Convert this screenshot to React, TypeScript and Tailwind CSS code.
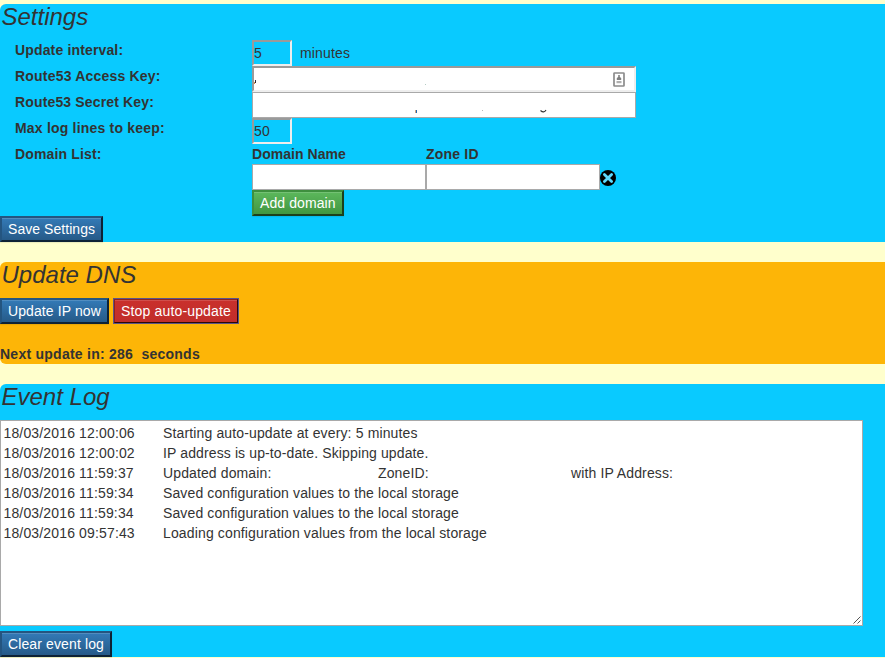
import React from 'react';

const button =
  'box-border block h-[26px] shrink-0 whitespace-nowrap border-2 text-left text-[14px] leading-[20px] text-white pl-[6px] pb-px';
const blue =
  'border-t-[#245580] border-l-[#245580] border-r-[#0e2235] border-b-[#0e2235] bg-linear-to-b from-[#337ab7] to-[#265a88] shadow-[inset_0_1px_0_rgba(255,255,255,0.15),0_1px_1px_rgba(0,0,0,0.075)]';
const inset =
  'box-border border-2 border-t-[#9a9a9a] border-l-[#9a9a9a] border-r-[#eeeeee] border-b-[#eeeeee]';

const log: { time: string; text: React.ReactNode }[] = [
  { time: '18/03/2016 12:00:06', text: 'Starting auto-update at every: 5 minutes' },
  { time: '18/03/2016 12:00:02', text: 'IP address is up-to-date. Skipping update.' },
  {
    time: '18/03/2016 11:59:37',
    text: (
      <span className="flex">
        <span className="w-[215px]">Updated domain:</span>
        <span className="w-[193px]">ZoneID:</span>
        <span>with IP Address:</span>
      </span>
    ),
  },
  { time: '18/03/2016 11:59:34', text: 'Saved configuration values to the local storage' },
  { time: '18/03/2016 11:59:34', text: 'Saved configuration values to the local storage' },
  { time: '18/03/2016 09:57:43', text: 'Loading configuration values from the local storage' },
];

function Heading({ children }: { children: string }) {
  return <h2 className="h-[36px] pl-[1.5px] text-[24px] leading-[26px] italic">{children}</h2>;
}

function Row({
  label,
  children,
  h = 'h-[26px]',
  spacing = 'tracking-[0.2px]',
}: {
  label: string;
  children: React.ReactNode;
  h?: string;
  spacing?: string;
}) {
  return (
    <div className={`flex ${h}`}>
      <div className={`w-[252px] shrink-0 pl-[15px] text-[14px] leading-[20px] font-bold ${spacing}`}>{label}</div>
      {children}
    </div>
  );
}

export default function App() {
  return (
    <div
      className="flex h-[658px] w-[885px] flex-col gap-5 overflow-hidden bg-[#ffffcc] pt-1 text-[14px] text-[#333333]"
      style={{ fontFamily: '"Liberation Sans", Arial, sans-serif' }}
    >
      <section className="h-[238px] shrink-0 rounded-l-[6px] bg-[#09caff]">
        <Heading>Settings</Heading>
        <Row label="Update interval:" spacing="tracking-[0.15px]">
          <div className={`${inset} h-[26px] w-[40px] leading-[22px]`}>5</div>
          <span className="pl-2 leading-[26px] tracking-[0.15px]">minutes</span>
        </Row>
        <Row label="Route53 Access Key:">
          <div className={`${inset} flex h-[26px] w-[384px] items-center justify-between bg-white pr-[9px]`}>
            <svg width="180" height="22" viewBox="0 0 180 22" shapeRendering="crispEdges">
              <path d="M1 12h1v3h-1z" fill="#2b2b3a" />
              <path d="M0 14h1v2h-1z" fill="#c98a4a" />
              <path d="M171 16h1v1h-1z" fill="#b5ccc4" />
            </svg>
            <svg className="mt-px" width="12" height="15" viewBox="0 0 12 15">
              <rect x="1" y="1" width="10" height="13" rx="0.5" fill="#fff" stroke="#8c8c8c" strokeWidth="1.7" />
              <path d="M5.2 3h1.6v2l1.4 1v2H3.8V6l1.4-1z" fill="#808080" />
              <path d="M3.5 9h5v2.2h-5z" fill="#b0b0b0" />
            </svg>
          </div>
        </Row>
        <Row label="Route53 Secret Key:" spacing="tracking-[0.15px]">
          <div className="h-[26px] w-[384px] border border-[#a9a9a9] bg-white">
            <svg width="382" height="24" viewBox="0 0 382 24">
              <path d="M162 17h1v3h-1z" fill="#d4a884" />
              <path d="M163 17h1v3h-1z" fill="#2568b0" />
              <path d="M229 17h1v1h-1z" fill="#b8b8b8" />
              <path d="M287.5 17.5q3.5 3 5.5-0.5" fill="none" stroke="#333" strokeWidth="1.2" />
            </svg>
          </div>
        </Row>
        <Row label="Max log lines to keep:">
          <div className={`${inset} h-[26px] w-[40px] leading-[22px] tracking-[0.15px]`}>50</div>
        </Row>
        <Row label="Domain List:" h="h-[72px]" spacing="tracking-[0.15px]">
          <div>
            <div className="flex h-5 leading-[20px] font-bold tracking-[0.05px]">
              <span className="w-[174px]">Domain Name</span>
              <span className="tracking-[0.2px]">Zone ID</span>
            </div>
            <div className="flex h-[26px] items-center">
              <div className="h-[26px] w-[174px] border border-[#a9a9a9] bg-white" />
              <div className="h-[26px] w-[174px] border border-[#a9a9a9] bg-white" />
              <svg className="mt-0.5" width="16" height="16" viewBox="0 0 16 16">
                <circle cx="8" cy="8" r="8" fill="#000" />
                <path d="M4.4 4.4l7.2 7.2M11.6 4.4l-7.2 7.2" stroke="#5cd8fc" strokeWidth="2.8" strokeLinecap="round" />
              </svg>
            </div>
            <button
              className={`${button} w-[92px] tracking-[0.1px] border-t-[#3e8f3e] border-l-[#3e8f3e] border-r-[#1c401c] border-b-[#1c401c] bg-linear-to-b from-[#5cb85c] to-[#419641] shadow-[inset_0_1px_0_rgba(255,255,255,0.15),0_1px_1px_rgba(0,0,0,0.075)]`}
            >
              Add domain
            </button>
          </div>
        </Row>
        <button className={`${button} ${blue} w-[103px] tracking-[0.05px]`}>Save Settings</button>
      </section>

      <section className="h-[102px] shrink-0 rounded-l-[6px] bg-[#fdb507]">
        <Heading>Update DNS</Heading>
        <div className="flex gap-1">
          <button className={`${button} ${blue} w-[109px] tracking-[0.1px]`}>Update IP now</button>
          <button
            className={`${button} w-[126px] tracking-[0.16px] border-t-[#8b211e] border-l-[#8b211e] border-r-[#2b0909] border-b-[#2b0909] bg-linear-to-b from-[#c9302c] to-[#c12e2a] shadow-[inset_0_1px_0_rgba(255,255,255,0.15)] outline-1 -outline-offset-1 outline-[#5b5489]`}
          >
            Stop auto-update
          </button>
        </div>
        <div className="mt-5 leading-[20px] font-bold tracking-[0.25px] whitespace-pre">Next update in: 286  seconds</div>
      </section>

      <section className="h-[273px] shrink-0 rounded-l-[6px] bg-[#09caff]">
        <Heading>Event Log</Heading>
        <div className="relative h-[206px] w-[863px] border border-[#a9a9a9] bg-white pt-[2px] pl-[2px]">
          {log.map((e, i) => (
            <div key={i} className={`flex h-5 leading-[20px] ${i < 1 || i > 4 ? 'tracking-[0.14px]' : 'tracking-[0.12px]'}`}>
              <span className="w-[160px] pl-[0.5px] tracking-[0.15px]">{e.time}</span>
              {e.text}
            </div>
          ))}
          <svg className="absolute right-px bottom-px" width="8" height="8" viewBox="0 0 8 8">
            <path d="M0.5 7.5l7-7M4.5 7.5l3-3" stroke="#555" fill="none" />
          </svg>
        </div>
        <button className={`${button} ${blue} mt-[5px] w-[112px] tracking-[0.12px]`}>Clear event log</button>
      </section>
    </div>
  );
}
